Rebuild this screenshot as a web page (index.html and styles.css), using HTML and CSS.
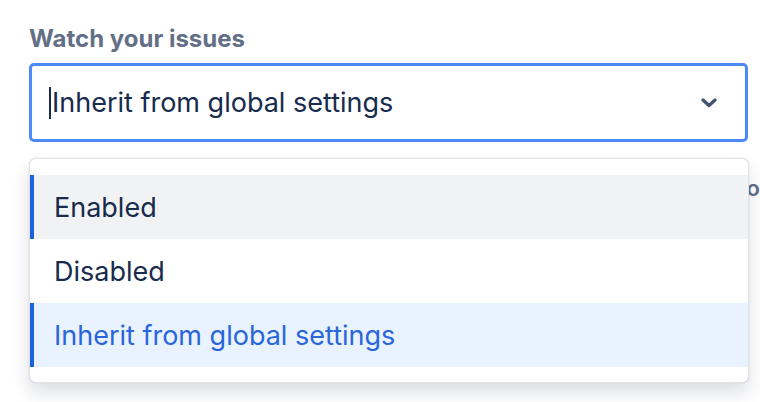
FILE: index.html
```html
<!DOCTYPE html>
<html lang="en">
<head>
<meta charset="utf-8">
<link rel="stylesheet" href="styles.css">
</head>
<body>
<div class="field">
  <label class="label">Watch your issues</label>
  <div class="select">
    <span class="caret"></span>
    <span class="value">Inherit from global settings</span>
    <svg class="chevron" width="24" height="24" viewBox="0 0 24 24" aria-hidden="true">
      <path d="M6 9 L12 14.5 L18 9" fill="none" stroke="currentColor" stroke-width="3.4" stroke-linecap="round" stroke-linejoin="round"/>
    </svg>
  </div>
  <div class="hint">Automatically watch issues you create or are assigned to</div>
  <ul class="menu">
    <li class="option hover">Enabled</li>
    <li class="option">Disabled</li>
    <li class="option selected">Inherit from global settings</li>
  </ul>
</div>
</body>
</html>
```
FILE: styles.css
```css
html, body {
  margin: 0;
  padding: 0;
  background: #ffffff;
}
body {
  font-family: Inter, "Noto Sans", "Liberation Sans", sans-serif;
  width: 760px;
  height: 402px;
  overflow: hidden;
}
.field {
  position: relative;
  padding: 25px 0 0 29px;
  display: flex;
  flex-direction: column;
}
.label {
  font-size: 24px;
  font-weight: 650;
  line-height: 28px;
  color: #626f86;
}
.select {
  margin-top: 10px;
  width: 719px;
  height: 79px;
  box-sizing: border-box;
  border: 3px solid #4c8bf5;
  border-radius: 5px;
  display: flex;
  align-items: center;
  padding: 0 24px 0 17px;
}
.caret {
  width: 2px;
  height: 32px;
  background: #172b4d;
  margin-right: 1px;
}
.value {
  flex: 1;
  font-size: 27px;
  color: #172b4d;
}
.chevron {
  color: #44546f;
}
.hint {
  margin-top: 33px;
  font-size: 22px;
  font-weight: 600;
  color: #626f86;
  white-space: nowrap;
  text-align: right;
  line-height: 26px;
}
.menu {
  position: absolute;
  left: 29px;
  top: 158px;
  width: 720px;
  box-sizing: border-box;
  margin: 0;
  padding: 16px 0 15px;
  list-style: none;
  background: #ffffff;
  border: 1px solid #e2e4e8;
  border-radius: 7px;
  box-shadow: 0 10px 18px rgba(9, 30, 66, 0.14), 0 0 1px rgba(9, 30, 66, 0.25);
}
.option {
  height: 64px;
  display: flex;
  align-items: center;
  padding-left: 20px;
  font-size: 27px;
  color: #172b4d;
  border-left: 4px solid transparent;
}
.option.hover {
  background: #f1f2f4;
  border-left-color: #1d63dd;
}
.option.selected {
  background: #e9f2ff;
  border-left-color: #1d63dd;
  color: #2965db;
}
```
